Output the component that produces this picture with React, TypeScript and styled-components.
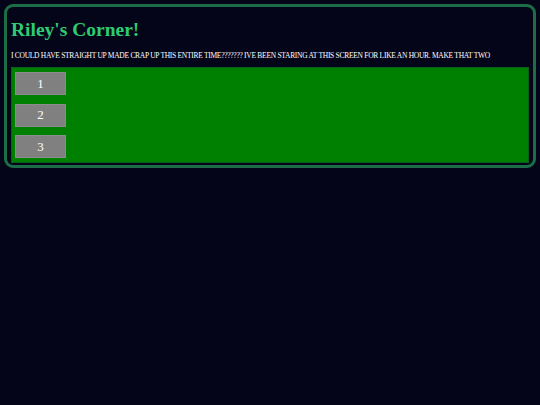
import styled, { createGlobalStyle } from "styled-components";

const GlobalStyle = createGlobalStyle`
  html, body {
    margin: 0;
    padding: 0;
    background: #05051a;
  }
  body {
    padding: 4px;
    font-family: "Liberation Serif", "Times New Roman", serif;
  }
`;

const items = ["1", "2", "3"];

const App = () => {
  return (
    <>
      <GlobalStyle />
      <Card>
        <Title>Riley's Corner!</Title>
        <Blurb>
          I could have straight up made crap up this entire time??????? ive
          been staring at this screen for like an hour. make that two
        </Blurb>
        <Panel>
          {items.map((item) => (
            <NumberButton key={item}>{item}</NumberButton>
          ))}
        </Panel>
      </Card>
    </>
  );
};

export default App;

const Card = styled.div`
  border: 3px solid #1b6e45;
  border-radius: 9px;
  background: #05051a;
  padding: 11px 4px 2px;
  display: flex;
  flex-direction: column;
`;

const Title = styled.h1`
  margin: 0;
  color: #2ecc71;
  font-size: 19.5px;
  font-weight: bold;
  line-height: 24px;
`;

const Blurb = styled.p`
  margin: 9px 0 6px;
  color: #ffffff;
  font-size: 7.5px;
  letter-spacing: -0.28px;
  line-height: 10px;
  text-transform: uppercase;
  white-space: nowrap;
`;

const Panel = styled.div`
  background: #008000;
  border: 1px solid #0b5e1c;
  padding: 4px 3px;
  display: flex;
  flex-direction: column;
  align-items: flex-start;
  gap: 8.5px;
`;

const NumberButton = styled.button`
  width: 51px;
  height: 23px;
  background: #808080;
  border: 1px solid #8c8c8c;
  color: #ffffff;
  font-family: "Liberation Serif", "Times New Roman", serif;
  font-size: 13px;
  padding: 0;
  cursor: pointer;
`;
